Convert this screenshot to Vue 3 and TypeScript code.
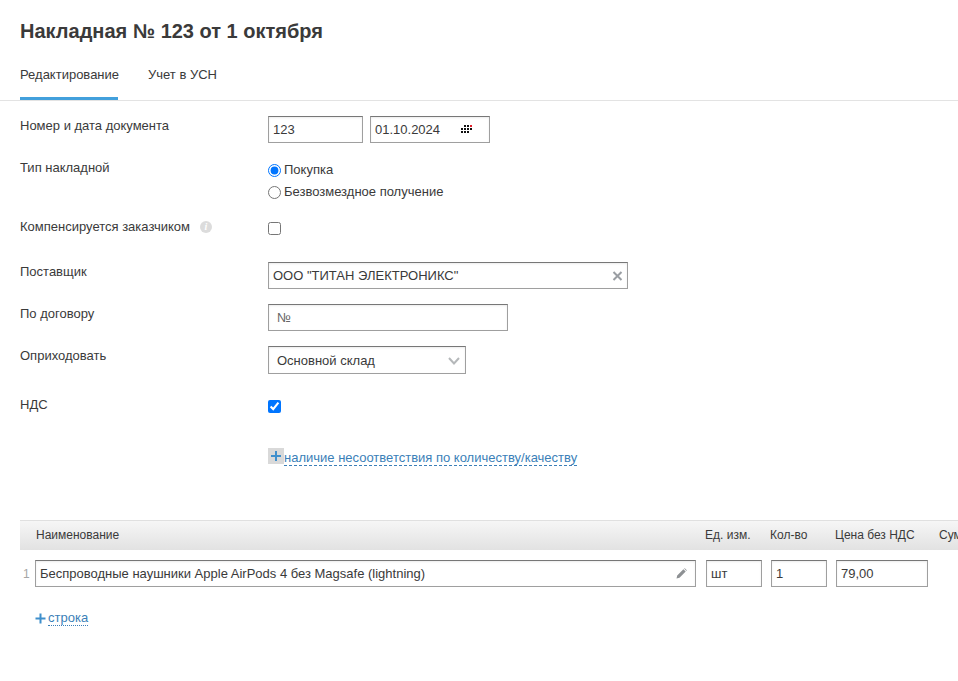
<script setup lang="ts">
const columns: string[] = ['Ед. изм.', 'Кол-во', 'Цена без НДС', 'Сумма'];
</script>

<template>
  <div class="page">
    <h1 class="title">Накладная № 123 от 1 октября</h1>
    <nav class="tabs">
      <a class="tab active">Редактирование</a>
      <a class="tab">Учет в УСН</a>
    </nav>

    <form class="form" @submit.prevent>
      <div class="row r-number">
        <label class="label">Номер и дата документа</label>
        <div class="controls inline">
          <input class="field w-number" value="123" />
          <div class="date-wrap">
            <input class="field w-date" value="01.10.2024" />
            <svg class="cal" width="11" height="8" viewBox="0 0 11 8">
              <g fill="#111">
                <rect x="3" y="0" width="2" height="2" /><rect x="6" y="0" width="2" height="2" /><rect x="9" y="0" width="2" height="2" fill="#e0202a" />
                <rect x="0" y="3" width="2" height="2" /><rect x="3" y="3" width="2" height="2" /><rect x="6" y="3" width="2" height="2" /><rect x="9" y="3" width="2" height="2" />
                <rect x="0" y="6" width="2" height="2" /><rect x="3" y="6" width="2" height="2" /><rect x="6" y="6" width="2" height="2" />
              </g>
            </svg>
          </div>
        </div>
      </div>

      <div class="row r-type">
        <label class="label">Тип накладной</label>
        <div class="controls radios">
          <label class="radio"><input type="radio" name="type" checked />Покупка</label>
          <label class="radio"><input type="radio" name="type" />Безвозмездное получение</label>
        </div>
      </div>

      <div class="row r-comp">
        <label class="label">Компенсируется заказчиком<span class="info">i</span></label>
        <div class="controls"><input class="check" type="checkbox" /></div>
      </div>

      <div class="row r-supplier">
        <label class="label">Поставщик</label>
        <div class="controls supplier">
          <input class="field w-supplier" value='ООО "ТИТАН ЭЛЕКТРОНИКС"' />
          <svg class="clear" width="11" height="10" viewBox="0 0 11 10">
            <path d="M1.5 1l8 8M9.5 1l-8 8" stroke="#9a9ea3" stroke-width="2" fill="none" />
          </svg>
        </div>
      </div>

      <div class="row r-contract">
        <label class="label">По договору</label>
        <div class="controls"><input class="field w-contract" placeholder="№" /></div>
      </div>

      <div class="row r-store">
        <label class="label">Оприходовать</label>
        <div class="controls select">
          <span>Основной склад</span>
          <svg width="12" height="8" viewBox="0 0 12 8">
            <path d="M1 1l5 5.5L11 1" stroke="#b5b8ba" stroke-width="2" fill="none" />
          </svg>
        </div>
      </div>

      <div class="row r-vat">
        <label class="label">НДС</label>
        <div class="controls"><input class="check" type="checkbox" checked /></div>
      </div>

      <div class="row r-link">
        <span class="label"></span>
        <div class="controls link-line">
          <span class="plus-box">
            <svg width="12" height="12" viewBox="0 0 12 12"><path d="M6 1v10M1 6h10" stroke="#3f8fcc" stroke-width="2" /></svg>
          </span>
          <a class="dashed">наличие несоответствия по количеству/качеству</a>
        </div>
      </div>
    </form>

    <section class="table">
      <div class="thead">
        <span class="th-name">Наименование</span>
        <span class="th-unit">{{ columns[0] }}</span>
        <span class="th-qty">{{ columns[1] }}</span>
        <span class="th-price">{{ columns[2] }}</span>
        <span class="th-sum">{{ columns[3] }}</span>
      </div>
      <div class="tr">
        <span class="num">1</span>
        <div class="name-wrap">
          <input class="field cell-name" value="Беспроводные наушники Apple AirPods 4 без Magsafe (lightning)" />
          <svg class="pencil" width="11" height="11" viewBox="0 0 11 11">
            <path d="M0.5 10.5l0.7-3L7.4 1.3l2.3 2.3-6.2 6.2z M8.1 0.6l0.7-0.4 2 2-0.4 0.7z" fill="#8d9093" />
          </svg>
        </div>
        <input class="field cell-unit" value="шт" />
        <input class="field cell-qty" value="1" />
        <input class="field cell-price" value="79,00" />
      </div>
      <div class="add">
        <svg width="11" height="11" viewBox="0 0 11 11"><path d="M5.5 0.5v10M0.5 5.5h10" stroke="#3f8fcc" stroke-width="2" /></svg>
        <a class="dotted">строка</a>
      </div>
    </section>
  </div>
</template>

<style>
html, body { margin: 0; background: #fff; overflow: hidden; }
</style>

<style scoped>
.page {
  width: 958px;
  height: 681px;
  overflow: hidden;
  box-sizing: border-box;
  font-family: "Liberation Sans", Arial, sans-serif;
  font-size: 13px;
  line-height: 16px;
  color: #3a3a3a;
}
.title {
  margin: 0;
  padding: 20px 20px 0;
  font-size: 20px;
  line-height: 23px;
  font-weight: 700;
  color: #3a3a3a;
}
.tabs {
  display: flex;
  gap: 30px;
  margin-top: 14px;
  padding: 0 20px;
  height: 43px;
  border-bottom: 1px solid #e3e3e3;
}
.tab { padding-top: 10px; height: 30px; white-space: nowrap; }
.tab.active { width: 98px; border-bottom: 3px solid #42a0dc; }

.form { display: flex; flex-direction: column; }
.row { display: flex; align-items: flex-start; padding-left: 20px; }
.label { width: 248px; flex: none; display: flex; align-items: center; }
.r-number { margin-top: 15px; height: 27px; }
.r-number .label { margin-top: 2px; }
.r-type { margin-top: 19px; }
.r-type .label { margin-top: -2px; }
.r-comp { margin-top: 19px; }
.r-supplier { margin-top: 27px; }
.r-supplier .label { margin-top: 2px; }
.r-contract { margin-top: 15px; }
.r-contract .label { margin-top: 2px; }
.r-store { margin-top: 15px; }
.r-store .label { margin-top: 2px; }
.r-vat { margin-top: 23px; }
.r-link { margin-top: 36px; }

.inline { display: flex; gap: 7px; }
.field {
  box-sizing: border-box;
  height: 27px;
  margin: 0;
  padding: 0 4px;
  border: 1px solid #9f9f9f;
  border-top-color: #777;
  border-radius: 0;
  outline: none;
  background: #fff;
  font: 13px "Liberation Sans", Arial, sans-serif;
  color: #3a3a3a;
  box-shadow: inset 0 1px 2px rgba(0, 0, 0, 0.08);
}
.field::placeholder { color: #666; opacity: 1; }
.w-number { width: 95px; }
.w-date { width: 120px; }
.date-wrap { position: relative; }
.cal { position: absolute; left: 91px; top: 9px; }
.radios { display: flex; flex-direction: column; gap: 6px; }
.radio { display: flex; align-items: center; height: 16px; }
.radio input { width: 13px; height: 13px; margin: 0 3px 0 0; }
.check { display: block; width: 13px; height: 13px; margin: 3px 0 0; }
.info {
  width: 12px; height: 12px; margin-left: 10px;
  border-radius: 50%;
  background: #dcdcdc;
  color: #fff;
  font: italic 700 10px/12px "Liberation Serif", serif;
  text-align: center;
}
.supplier { position: relative; }
.w-supplier { width: 360px; }
.clear { position: absolute; left: 344px; top: 9px; }
.w-contract { width: 240px; padding-left: 8px; }
.select {
  box-sizing: border-box;
  width: 198px;
  height: 28px;
  padding: 2px 5px 0 8px;
  display: flex;
  align-items: center;
  justify-content: space-between;
  border: 1px solid #9f9f9f;
  border-top-color: #777;
  box-shadow: inset 0 1px 2px rgba(0, 0, 0, 0.08);
}
.link-line { display: flex; align-items: flex-start; height: 18px; }
.plus-box {
  width: 16px; height: 16px;
  margin-top: -1px;
  background: #d9d9d9;
  display: flex; align-items: center; justify-content: center;
}
.dashed { color: #3b7fb8; border-bottom: 1px dashed #3b7fb8; line-height: 15px; margin-top: 1px; }

.table { margin-top: 53px; }
.thead {
  margin-left: 20px;
  height: 30px;
  padding-bottom: 2px;
  display: flex;
  align-items: center;
  white-space: nowrap;
  font-size: 12px;
  box-sizing: border-box;
  border-top: 1px solid #e0e0e0;
  background: linear-gradient(#f6f6f6, #e2e2e2);
}
.th-name { width: 669px; padding-left: 16px; flex: none; }
.th-unit { width: 65px; flex: none; }
.th-qty { width: 65px; flex: none; }
.th-price { width: 104px; flex: none; }
.th-sum { flex: none; }
.tr { display: flex; align-items: center; margin-top: 10px; padding-left: 20px; }
.num { width: 15px; flex: none; color: #a5a5a5; font-size: 12px; padding-left: 3px; box-sizing: border-box; }
.name-wrap { position: relative; }
.cell-name { width: 661px; }
.pencil { position: absolute; right: 9px; top: 8px; }
.cell-unit { width: 56px; margin-left: 10px; }
.cell-qty { width: 56px; margin-left: 9px; }
.cell-price { width: 92px; margin-left: 9px; }
.add { display: flex; align-items: center; gap: 2px; margin-top: 24px; padding-left: 35px; }
.dotted { color: #3b7fb8; border-bottom: 1px dotted #3b7fb8; line-height: 14px; font-size: 13px; }
</style>
